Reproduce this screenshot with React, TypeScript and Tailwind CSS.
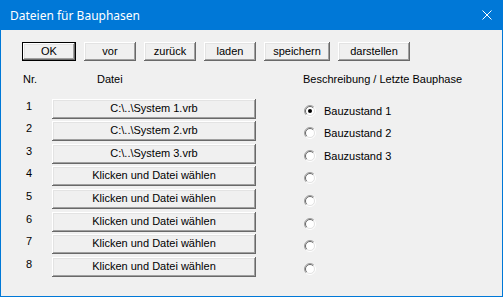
import React from 'react';

const topButtons = [
    { label: 'OK', w: 'w-[54px]', isDefault: true },
    { label: 'vor', w: 'w-[52px]' },
    { label: 'zurück', w: 'w-[52px]' },
    { label: 'laden', w: 'w-[52px]' },
    { label: 'speichern', w: 'w-[66px]' },
    { label: 'darstellen', w: 'w-[72px]' },
];

const rows = [
    { nr: 1, file: 'C:\\..\\System 1.vrb', text: 'Bauzustand 1', checked: true, mt: 'mt-0' },
    { nr: 2, file: 'C:\\..\\System 2.vrb', text: 'Bauzustand 2', mt: 'mt-[2px]' },
    { nr: 3, file: 'C:\\..\\System 3.vrb', text: 'Bauzustand 3', mt: 'mt-[3px]' },
    { nr: 4, file: 'Klicken und Datei wählen', text: '', mt: 'mt-[2px]' },
    { nr: 5, file: 'Klicken und Datei wählen', text: '', mt: 'mt-[3px]' },
    { nr: 6, file: 'Klicken und Datei wählen', text: '', mt: 'mt-[3px]' },
    { nr: 7, file: 'Klicken und Datei wählen', text: '', mt: 'mt-[2px]' },
    { nr: 8, file: 'Klicken und Datei wählen', text: '', mt: 'mt-[3px]' },
];

const bevel =
    'shadow-[inset_-1px_-1px_0_#696969,inset_1px_1px_0_#ffffff,inset_-2px_-2px_0_#a0a0a0,inset_2px_2px_0_#e3e3e3]';

const Radio: React.FC<{ checked?: boolean }> = ({ checked }) => (
    <svg width="12" height="12" viewBox="0 0 12 12" className="shrink-0">
        <circle cx="6" cy="6" r="4.5" fill="#ffffff" />
        <path d="M2.1 9.9 A5.5 5.5 0 0 1 9.9 2.1" fill="none" stroke="#a0a0a0" strokeWidth="1" />
        <path d="M2.8 9.2 A4.5 4.5 0 0 1 9.2 2.8" fill="none" stroke="#696969" strokeWidth="1" />
        <path d="M9.9 2.1 A5.5 5.5 0 0 1 2.1 9.9" fill="none" stroke="#ffffff" strokeWidth="1" />
        <path d="M9.2 2.8 A4.5 4.5 0 0 1 2.8 9.2" fill="none" stroke="#e3e3e3" strokeWidth="1" />
        {checked && <circle cx="6" cy="6" r="2" fill="#000000" />}
    </svg>
);

export default function App() {
    return (
        <div className="w-[503px] h-[297px] flex flex-col border border-t-0 border-[#0078d7] bg-[#f0f0f0] text-black text-[11px] leading-[13px] font-['Liberation_Sans',Arial,sans-serif]">
            {/* Title bar */}
            <div className="h-[30px] shrink-0 bg-[#0078d7] flex items-center justify-between pl-[9px] pr-[10px]">
                <span className="text-white text-[12px] font-['Noto_Sans',sans-serif]">Dateien für Bauphasen</span>
                <svg width="10" height="10" viewBox="0 0 10 10">
                    <path d="M0.5 0.5 L9.5 9.5 M9.5 0.5 L0.5 9.5" stroke="#ffffff" strokeWidth="1" />
                </svg>
            </div>

            {/* Body */}
            <div className="flex flex-col pl-[21px]">
                <div className="flex gap-[8px] mt-[12px]">
                    {topButtons.map((b) =>
                        b.isDefault ? (
                            <div key={b.label} className={`${b.w} h-[19px] border border-black`}>
                                <div className={`w-full h-full flex items-center justify-center ${bevel}`}>{b.label}</div>
                            </div>
                        ) : (
                            <div key={b.label} className={`${b.w} h-[19px] flex items-center justify-center ${bevel}`}>
                                {b.label}
                            </div>
                        )
                    )}
                </div>

                <div className="flex mt-[12px] h-[13px]">
                    <span className="w-[75px] pl-[1px]">Nr.</span>
                    <span className="w-[206px]">Datei</span>
                    <span>Beschreibung / Letzte Bauphase</span>
                </div>

                <div className="flex flex-col mt-[13px]">
                    {rows.map((r) => (
                        <div key={r.nr} className={`flex items-start h-[20px] ${r.mt}`}>
                            <span className="w-[30px] pl-[4px] pt-[1px]">{r.nr}</span>
                            <div className={`w-[204px] h-[20px] flex items-center justify-center pb-[1px] ${bevel}`}>
                                {r.file}
                            </div>
                            <div className="flex items-center gap-[8px] ml-[48px] h-[20px] pt-[4px]">
                                <Radio checked={r.checked} />
                                <span>{r.text}</span>
                            </div>
                        </div>
                    ))}
                </div>
            </div>
        </div>
    );
}
